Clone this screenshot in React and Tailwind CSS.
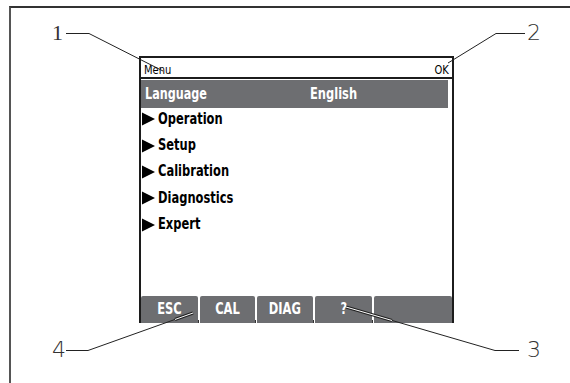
import React from 'react';

const cond = { fontFamily: '"Liberation Sans Narrow", "DejaVu Sans Condensed", "Liberation Sans", sans-serif' };

const items = ['Operation', 'Setup', 'Calibration', 'Diagnostics', 'Expert'];
const keys = [
  { label: 'ESC', w: 'w-[57px]' },
  { label: 'CAL', w: 'w-[55px]' },
  { label: 'DIAG', w: 'w-[56px]' },
  { label: '?', w: 'w-[57px]' },
  { label: '', w: 'flex-1' },
];

function Callouts() {
  return (
    <svg className="absolute inset-0 pointer-events-none" width="570" height="383" viewBox="0 0 570 383">
      <g fill="none" stroke="#222" strokeWidth="1">
        <polyline points="66,33.5 89,33.5 163,71" />
        <polyline points="448,63 496,33.5 525,33.5" />
        <polyline points="346,307 495,350.5 519,350.5" />
        <polyline points="193,313 88,350.5 66,350.5" />
      </g>
      <g fill="none">
        <line x1="346" y1="307" x2="392" y2="320.5" stroke="#222" strokeWidth="3" />
        <line x1="346" y1="307" x2="392" y2="320.5" stroke="#fff" strokeWidth="1" />
        <line x1="193" y1="313" x2="175" y2="319.5" stroke="#222" strokeWidth="3" />
        <line x1="193" y1="313" x2="175" y2="319.5" stroke="#fff" strokeWidth="1" />
      </g>
    </svg>
  );
}

export default function App() {
  return (
    <div className="relative w-[570px] h-[383px] bg-white overflow-hidden">
      {/* outer frame */}
      <div className="pt-[6px] pl-[9px] h-full">
        <div className="h-full border-l-2 border-t-2 border-l-[#555] border-t-[#333] pl-[128px] pt-[48px]">
          {/* display */}
          <div className="w-[315px] h-[267px] border-x-2 border-t-2 border-[#1c1c1c] flex flex-col" style={cond}>
            <div className="h-[21px] border-b-2 border-[#1c1c1c] flex items-end justify-between px-[3px] pb-[1px] text-[13px] leading-none text-black">
              <span className="inline-block origin-left scale-x-[0.85]">Menu</span>
              <span className="inline-block origin-right scale-x-[0.85]">OK</span>
            </div>
            <div className="mt-[1px] mr-[4px] h-[28px] bg-[#6d6e71] flex items-center text-white font-bold text-[15px] leading-none">
              <span className="pl-[4px] w-[169px]">
                <span className="inline-block origin-left scale-x-[0.83]">Language</span>
              </span>
              <span className="inline-block origin-left scale-x-[0.85]">English</span>
            </div>
            <div className="flex flex-col mt-[-2px]">
              {items.map((it) => (
                <div key={it} className="h-[26.4px] flex items-center gap-[2px] text-[15px] font-bold leading-none text-black">
                  <svg width="15" height="14" viewBox="0 0 15 14" className="shrink-0">
                    <polygon points="1,0.5 14,7 1,13.5" fill="#000" />
                  </svg>
                  <span className="inline-block origin-left scale-x-[0.85]">{it}</span>
                </div>
              ))}
            </div>
            <div className="mt-auto h-[27px] flex gap-[2px]">
              {keys.map((k, i) => (
                <div key={i} className={`${k.w} relative h-full bg-[#6d6e71] rounded-t-[2px] flex items-center justify-center text-white font-bold text-[15px] leading-none`}>
                  <span className="inline-block scale-x-[0.85]">{k.label}</span>
                  {i > 0 && <span className="absolute left-[-2px] bottom-0 w-[1px] h-[3px] bg-[#333]" />}
                </div>
              ))}
            </div>
          </div>
        </div>
      </div>

      <Callouts />
      <span className="absolute left-[52px] top-[22px] text-[22px] leading-none text-[#333]" style={{ fontFamily: '"Liberation Serif", serif' }}>1</span>
      <span className="absolute left-[527px] top-[22px] text-[22px] leading-none text-[#333]" style={{ fontFamily: '"DejaVu Sans", sans-serif', fontWeight: 200 }}>2</span>
      <span className="absolute left-[527px] top-[339px] text-[22px] leading-none text-[#333]" style={{ fontFamily: '"DejaVu Sans", sans-serif', fontWeight: 200 }}>3</span>
      <span className="absolute left-[52px] top-[339px] text-[22px] leading-none text-[#333]" style={{ fontFamily: '"DejaVu Sans", sans-serif', fontWeight: 200 }}>4</span>
    </div>
  );
}
